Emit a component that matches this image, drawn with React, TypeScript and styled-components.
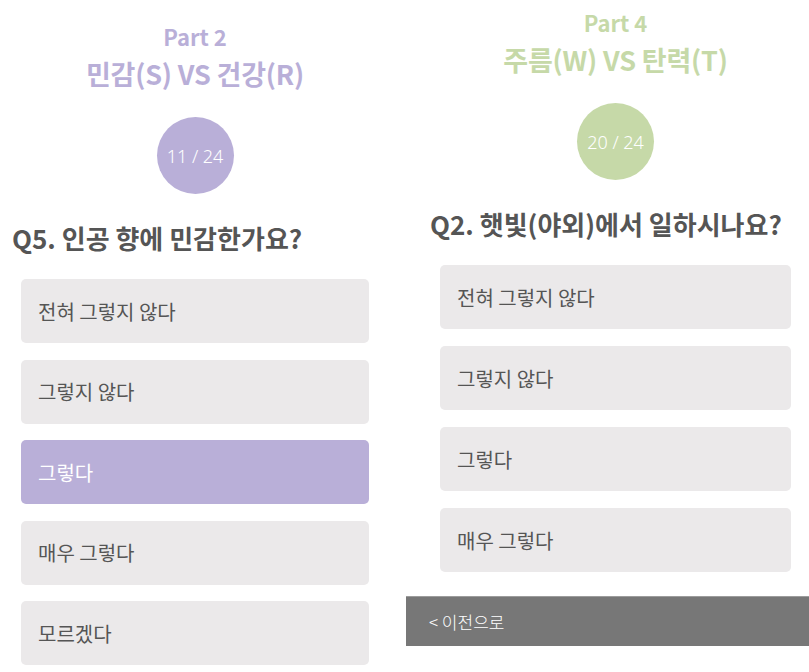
import React from "react";
import styled, { createGlobalStyle } from "styled-components";

const Global = createGlobalStyle`
  html, body { margin: 0; padding: 0; background: #ffffff; }
  body {
    width: 809px;
    height: 672px;
    overflow: hidden;
    font-family: "Noto Sans CJK KR", "Noto Sans", sans-serif;
  }
`;

const Page = styled.div`
  display: flex;
  gap: 16px;
  width: 809px;
  height: 672px;
  overflow: hidden;
`;

const Panel = styled.section<{ $width: number; $top: number }>`
  flex: 0 0 ${(p) => p.$width}px;
  width: ${(p) => p.$width}px;
  padding-top: ${(p) => p.$top}px;
  display: flex;
  flex-direction: column;
  align-items: center;
  box-sizing: border-box;
`;

const Part = styled.div<{ $color: string }>`
  font-size: 22px;
  line-height: 26px;
  font-weight: 700;
  color: ${(p) => p.$color};
`;

const Title = styled.h1<{ $color: string }>`
  margin: 8px 0 0;
  font-size: 27px;
  line-height: 34px;
  font-weight: 700;
  color: ${(p) => p.$color};
  letter-spacing: -0.2px;
`;

const Badge = styled.div<{ $color: string }>`
  margin-top: 26px;
  width: 77px;
  height: 77px;
  border-radius: 50%;
  background: ${(p) => p.$color};
  display: flex;
  align-items: center;
  justify-content: center;
  color: #ffffff;
  font-family: "Noto Sans", "Noto Sans CJK KR", sans-serif;
  font-weight: 300;
  font-size: 18px;
`;

const Question = styled.h2<{ $indent: number }>`
  align-self: stretch;
  margin: 27px 0 0;
  padding-left: ${(p) => p.$indent}px;
  font-size: 26px;
  line-height: 34px;
  font-weight: 700;
  color: #555555;
`;

const Options = styled.div<{ $side: number; $gap: number }>`
  align-self: stretch;
  margin-top: 24px;
  padding: 0 ${(p) => p.$side}px;
  display: flex;
  flex-direction: column;
  gap: ${(p) => p.$gap}px;
`;

const Option = styled.div<{ $active?: string }>`
  height: 64px;
  border-radius: 5px;
  background: ${(p) => p.$active ?? "#ebe9ea"};
  color: ${(p) => (p.$active ? "#ffffff" : "#555555")};
  display: flex;
  align-items: center;
  padding-left: 17px;
  font-size: 20px;
  font-weight: 400;
`;

const BackBar = styled.div`
  align-self: stretch;
  margin-top: 24px;
  height: 50px;
  box-sizing: border-box;
  background: #777777;
  border-top: 1px solid #9c9c9c;
  display: flex;
  align-items: center;
  padding-left: 23px;
  color: #ffffff;
  font-size: 17px;
  font-weight: 300;
`;

const PURPLE = "#b9afd8";
const GREEN = "#c6d9a8";

const answers = ["전혀 그렇지 않다", "그렇지 않다", "그렇다", "매우 그렇다", "모르겠다"];

export default function App() {
  return (
    <>
      <Global />
      <Page>
        <Panel $width={390} $top={23}>
          <Part $color={PURPLE}>Part 2</Part>
          <Title $color={PURPLE}>민감(S) VS 건강(R)</Title>
          <Badge $color={PURPLE}>11 / 24</Badge>
          <Question $indent={12}>Q5. 인공 향에 민감한가요?</Question>
          <Options $side={21} $gap={16.5}>
            {answers.map((a) => (
              <Option key={a} $active={a === "그렇다" ? PURPLE : undefined}>
                {a}
              </Option>
            ))}
          </Options>
        </Panel>
        <Panel $width={419} $top={9}>
          <Part $color={GREEN}>Part 4</Part>
          <Title $color={GREEN}>주름(W) VS 탄력(T)</Title>
          <Badge $color={GREEN}>20 / 24</Badge>
          <Question $indent={24}>Q2. 햇빛(야외)에서 일하시나요?</Question>
          <Options $side={34} $gap={17}>
            {answers.slice(0, 4).map((a) => (
              <Option key={a}>{a}</Option>
            ))}
          </Options>
          <BackBar>&lt; 이전으로</BackBar>
        </Panel>
      </Page>
    </>
  );
}
